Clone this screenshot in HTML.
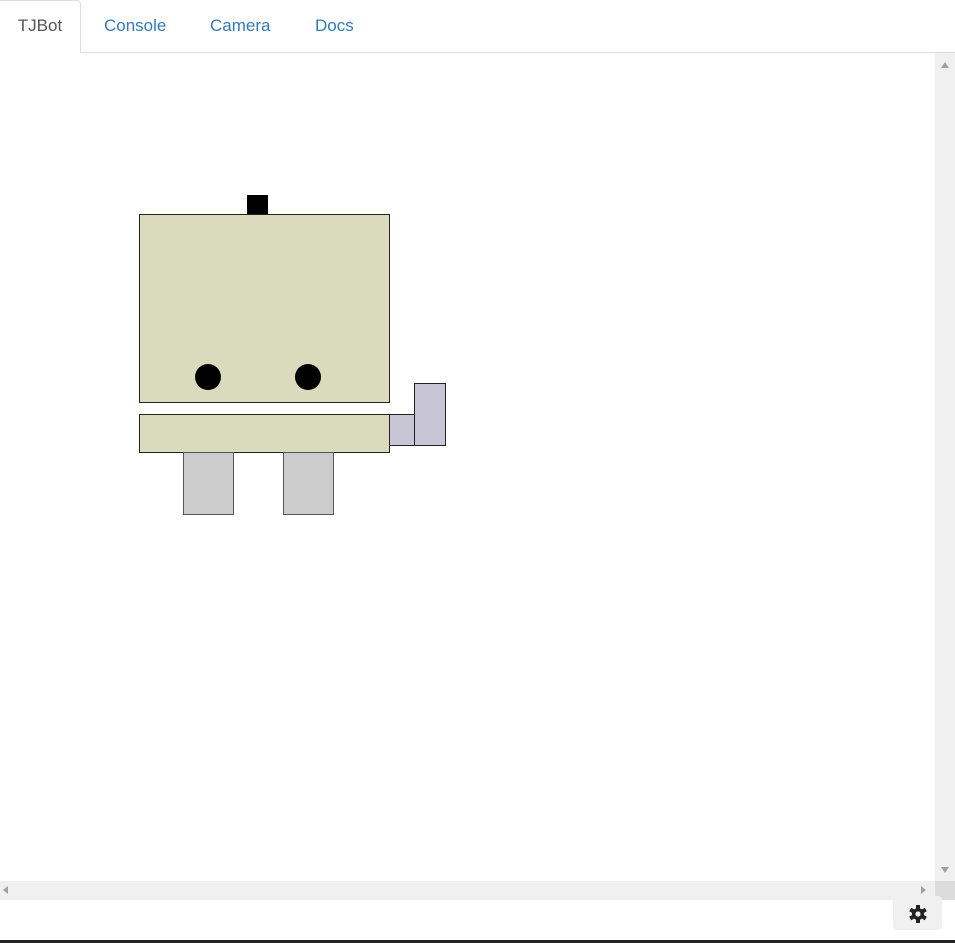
<!DOCTYPE html>
<html><head><meta charset="utf-8"><style>
body{margin:0;width:955px;height:943px;overflow:hidden;background:#fff;font-family:"Liberation Sans",sans-serif;position:relative}
.tabs{position:absolute;left:0;top:0;width:955px;height:52px;border-bottom:1px solid #ddd}
.tab{position:absolute;top:0;height:52px;line-height:52px;font-size:17px;color:#337ab7}
.active{left:0;width:81px;border:1px solid #ddd;border-bottom:1px solid #fff;border-left:none;border-radius:0 4px 0 0;color:#555;text-align:center;height:53px;background:#fff;box-sizing:border-box;line-height:49px}
.vs{position:absolute;left:935px;top:53px;width:20px;height:828px;background:#f0f0f0}
.hs{position:absolute;left:0;top:881px;width:935px;height:19px;background:#f0f0f0}
.corner{position:absolute;left:935px;top:881px;width:20px;height:19px;background:#dcdcdc}
.gear{position:absolute;left:893px;top:896px;width:49px;height:34px;background:#f0f0f0;border-radius:4px}
.bot{position:absolute;left:0;top:940px;width:955px;height:3px;background:#222}
</style></head><body>
<div class="tabs">
<div class="tab active">TJBot</div>
<div class="tab" style="left:104px">Console</div>
<div class="tab" style="left:210px">Camera</div>
<div class="tab" style="left:315px">Docs</div>
</div>
<svg style="position:absolute;left:0;top:0" width="955" height="943">
<rect x="247" y="195" width="21" height="20" fill="#000"/>
<rect x="139.5" y="214.5" width="250" height="188" fill="#dadbbc" stroke="#222"/>
<circle cx="208" cy="377" r="13" fill="#000"/>
<circle cx="308" cy="377" r="13" fill="#000"/>
<rect x="139.5" y="414.5" width="250" height="38" fill="#dadbbc" stroke="#222"/>
<rect x="183.5" y="452.5" width="50" height="62" fill="#ccc" stroke="#555"/>
<rect x="283.5" y="452.5" width="50" height="62" fill="#ccc" stroke="#555"/>
<rect x="389.5" y="414.5" width="25" height="31" fill="#c8c6d6" stroke="#222"/>
<rect x="414.5" y="383.5" width="31" height="62" fill="#c8c6d6" stroke="#222"/>
</svg>
<div class="vs"><svg width="20" height="828"><path d="M6 15 L14 15 L10 9Z" fill="#a0a0a0"/><path d="M6 814 L14 814 L10 820Z" fill="#a0a0a0"/></svg></div>
<div class="hs"><svg width="935" height="19"><path d="M8 5 L8 13 L3 9Z" fill="#a0a0a0"/><path d="M921 5 L921 13 L926 9Z" fill="#a0a0a0"/></svg></div>
<div class="corner"></div>
<div class="gear"><svg width="49" height="34" viewBox="0 0 49 34"><g transform="translate(25,18)" fill="#222">
<circle r="6"/>
<g><rect x="-2" y="-9" width="4" height="18"/><rect x="-2" y="-9" width="4" height="18" transform="rotate(60)"/><rect x="-2" y="-9" width="4" height="18" transform="rotate(120)"/></g>
<circle r="2.6" fill="#f0f0f0"/></g></svg></div>
<div class="bot"></div>
</body></html>
